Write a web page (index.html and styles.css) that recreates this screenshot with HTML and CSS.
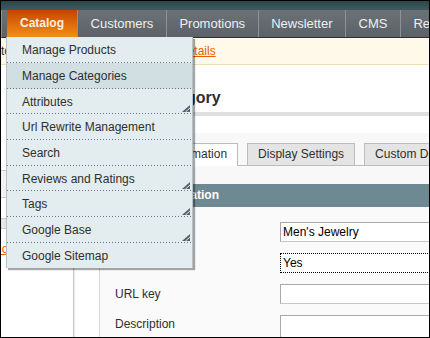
FILE: index.html
```html
<!DOCTYPE html>
<html lang="en">

<head>
    <meta charset="UTF-8">
    <meta name="viewport" content="width=device-width, initial-scale=1.0">
    <title>Manage Categories</title>
    <link rel="stylesheet" href="styles.css">
</head>

<body>
    <div class="frame">
        <div class="topbar"></div>
        <ul class="nav">
            <li class="nav-item active">Catalog</li>
            <li class="nav-item">Customers</li>
            <li class="nav-item">Promotions</li>
            <li class="nav-item">Newsletter</li>
            <li class="nav-item">CMS</li>
            <li class="nav-item">Reports</li>
        </ul>
        <div class="notice">
            <span>to</span><a class="notice-link" href="#">details</a>
        </div>

        <div class="page">
            <div class="side">
                <div class="store-box"></div>
                <div class="tree-bar"></div>
                <a class="tree-link" href="#">Collapse All</a>
            </div>
            <div class="main">
                <div class="content-header">
                    <h3>New Category</h3>
                </div>
                <div class="content">
                    <ul class="tabs">
                        <li class="tab active">General Information</li>
                        <li class="tab">Display Settings</li>
                        <li class="tab">Custom Design</li>
                        <li class="tab">Category Products</li>
                    </ul>
                    <div class="section-head">General Information</div>
                    <div class="fieldset">
                        <label class="field-label">Name</label>
                        <input class="field-input" type="text" value="Men's Jewelry">
                        <label class="field-label">Is Active</label>
                        <select class="field-input field-select">
                            <option>Yes</option>
                        </select>
                        <label class="field-label">URL key</label>
                        <input class="field-input" type="text" value="">
                        <label class="field-label top">Description</label>
                        <textarea class="field-input field-area"></textarea>
                    </div>
                </div>
            </div>
        </div>

        <!-- Catalog dropdown -->
        <ul class="dropdown">
            <li>Manage Products</li>
            <li class="hover">Manage Categories</li>
            <li>Attributes
                <svg class="sub-arrow" width="8" height="7" viewBox="0 0 8 7"><path d="M0 7L8 0V7Z" fill="#55636a"/><path d="M3.5 7L8 3" stroke="#dfe8ea" stroke-width="1"/></svg>
            </li>
            <li>Url Rewrite Management</li>
            <li>Search</li>
            <li>Reviews and Ratings
                <svg class="sub-arrow" width="8" height="7" viewBox="0 0 8 7"><path d="M0 7L8 0V7Z" fill="#55636a"/><path d="M3.5 7L8 3" stroke="#dfe8ea" stroke-width="1"/></svg>
            </li>
            <li>Tags
                <svg class="sub-arrow" width="8" height="7" viewBox="0 0 8 7"><path d="M0 7L8 0V7Z" fill="#55636a"/><path d="M3.5 7L8 3" stroke="#dfe8ea" stroke-width="1"/></svg>
            </li>
            <li>Google Base
                <svg class="sub-arrow" width="8" height="7" viewBox="0 0 8 7"><path d="M0 7L8 0V7Z" fill="#55636a"/><path d="M3.5 7L8 3" stroke="#dfe8ea" stroke-width="1"/></svg>
            </li>
            <li>Google Sitemap</li>
        </ul>
    </div>
</body>

</html>
```

FILE: styles.css
```css
* {
    margin: 0;
    padding: 0;
    box-sizing: border-box;
}

body {
    background: #fff;
    font-family: "Liberation Sans", Arial, sans-serif;
    font-size: 12px;
    color: #2f2f2f;
}

.frame {
    width: 430px;
    height: 338px;
    border: 1px solid #000;
    overflow: hidden;
    position: relative;
    background: #fff;
}

.topbar {
    height: 9px;
    background: linear-gradient(to bottom, #2c474b, #3d5a5e);
}

/* main navigation */
.nav {
    list-style: none;
    display: flex;
    height: 28px;
    padding-left: 5px;
    background: linear-gradient(to bottom, #6a7177, #5c6268);
    border-bottom: 1px solid #2a2f33;
    border-left: 1px solid #8c9297;
}

.nav-item {
    height: 27px;
    line-height: 27px;
    padding: 0 12.5px;
    font-size: 13px;
    color: #f0f0f0;
    white-space: nowrap;
}

.nav-item + .nav-item {
    border-left: 1px solid #8c9297;
}

.nav-item.active {
    padding: 0 13px;
    font-size: 12px;
    font-weight: bold;
    color: #fbeee2;
    background: linear-gradient(to bottom, #c74300, #f28f14);
}

/* system message bar */
.notice {
    height: 27px;
    line-height: 26px;
    background: #fff9e9;
    border-bottom: 1px solid #eedfb6;
    white-space: nowrap;
}

.notice-link {
    margin-left: 170px;
    color: #eb5e00;
}

/* page columns */
.page {
    display: flex;
    height: 280px;
}

.side {
    width: 73px;
    flex-shrink: 0;
    padding-top: 105px;
    border-right: 1px solid #c9c9c9;
    box-shadow: 1px 0 0 #ececec;
}

.store-box {
    height: 28px;
    background: #f2f2f2;
    border-top: 1px solid #c8c8c8;
    border-bottom: 1px solid #c8c8c8;
}

.tree-bar {
    height: 11px;
    margin-top: 20px;
    background: #e6e6e6;
    border-top: 1px solid #c8c8c8;
    border-bottom: 1px solid #c8c8c8;
}

.tree-link {
    display: block;
    margin-top: 13px;
    text-indent: -8px;
    color: #eb5e00;
    white-space: nowrap;
}

.main {
    flex: 1;
    padding-left: 25px;
    min-width: 0;
}

.content-header {
    padding: 23px 0 5px 15px;
    border-bottom: 4px solid #dfdfdf;
}

.content-header h3 {
    font-size: 16px;
    line-height: 19px;
    color: #2f2f2f;
}

.content {
    margin-top: 17px;
    padding-top: 10px;
    background: #f8f8f8;
    height: 200px;
}

.tabs {
    list-style: none;
    display: flex;
    align-items: flex-start;
    gap: 9px;
    height: 23px;
    padding-left: 11px;
    border-bottom: 1px solid #bcbcbc;
    white-space: nowrap;
}

.tab {
    height: 22px;
    line-height: 21px;
    padding: 0 10px;
    border: 1px solid #bcbcbc;
    border-bottom: none;
    background: #e4e4e4;
    color: #2f2f2f;
}

.tab.active {
    height: 23px;
    background: #fff;
}

.section-head {
    margin-top: 18px;
    height: 23px;
    line-height: 23px;
    padding-left: 6px;
    background: #6f8992;
    color: #fff;
    font-weight: bold;
    white-space: nowrap;
}

.fieldset {
    display: grid;
    grid-template-columns: 165px 1fr;
    row-gap: 11px;
    align-items: center;
    padding: 15px 0 15px 15px;
    background: #fafafa;
    border: 1px solid #d6d6d6;
    border-top: none;
    border-right: none;
}

.field-label {
    color: #2f2f2f;
}

.field-label.top {
    align-self: start;
    padding-top: 2px;
}

.field-input {
    width: 274px;
    height: 20px;
    padding: 0 2px;
    border: 1px solid;
    border-color: #a8a8a8 #c6c6c6 #c6c6c6 #a8a8a8;
    background: #fff;
    font-family: "Liberation Sans", Arial, sans-serif;
    font-size: 12px;
    color: #000;
}

.field-select {
    appearance: none;
    border: 1px dotted #000;
    border-radius: 0;
}

.field-area {
    height: 40px;
    resize: none;
}

/* catalog dropdown */
.dropdown {
    list-style: none;
    position: absolute;
    top: 36px;
    left: 5px;
    width: 187px;
    background: #e3ecee;
    border-left: 1px solid #b6c1c5;
    border-right: 1px solid #b6c1c5;
    box-shadow: 2px 2px 1px rgba(0, 0, 0, 0.35);
    z-index: 2;
}

.dropdown li {
    display: flex;
    align-items: center;
    justify-content: space-between;
    height: 26px;
    padding: 0 2px 0 15px;
    color: #2f2f2f;
    white-space: nowrap;
    background-image: linear-gradient(to right, #6d7b80 1px, transparent 1px);
    background-size: 3px 1px;
    background-repeat: repeat-x;
    background-position: left bottom;
}

.dropdown li:nth-child(3n) {
    height: 25px;
}

.dropdown li:last-child {
    background-image: none;
}

.dropdown li.hover {
    background-color: #d1dee2;
}

.sub-arrow {
    align-self: flex-end;
    margin-bottom: 2px;
}
```
